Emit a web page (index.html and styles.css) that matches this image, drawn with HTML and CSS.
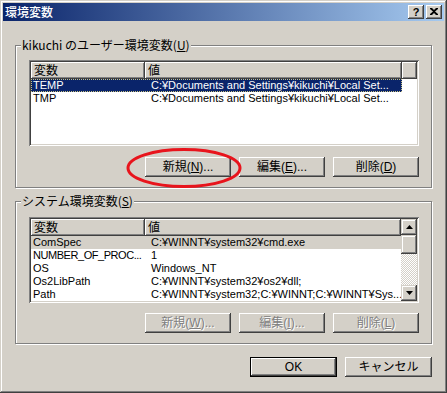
FILE: index.html
```html
<!DOCTYPE html>
<html lang="ja">
<head>
<meta charset="utf-8">
<title>環境変数</title>
<link rel="stylesheet" href="styles.css">
</head>
<body>
<div class="window">
  <div class="titlebar">
    <span class="title">環境変数</span>
    <div class="caption-btns">
      <span class="cap-btn help">?</span>
      <span class="cap-btn close">
        <svg width="8" height="7" viewBox="0 0 8 7"><path d="M0 0h2l2 2 2-2h2v1L5 3.5 8 6v1H6L4 5 2 7H0V6l3-2.5L0 1z" fill="#000"/></svg>
      </span>
    </div>
  </div>
  <div class="content">
    <div class="group">
      <span class="group-label">kikuchi のユーザー環境変数(<u>U</u>)</span>
      <div class="list list-user">
        <div class="list-main">
          <div class="header">
            <span class="hcell c1">変数</span><span class="hcell c2">値</span><span class="hcell rest"></span>
          </div>
          <div class="row selected focus"><span class="cell c1">TEMP</span><span class="cell c2">C:¥Documents and Settings¥kikuchi¥Local Set...</span></div>
          <div class="row"><span class="cell c1">TMP</span><span class="cell c2">C:¥Documents and Settings¥kikuchi¥Local Set...</span></div>
        </div>
      </div>
      <div class="btn-row">
        <button class="btn">新規(<u>N</u>)...</button>
        <button class="btn">編集(<u>E</u>)...</button>
        <button class="btn">削除(<u>D</u>)</button>
      </div>
    </div>

    <div class="group group-sys">
      <span class="group-label">システム環境変数(<u>S</u>)</span>
      <div class="list list-sys">
        <div class="list-main">
          <div class="header">
            <span class="hcell c1">変数</span><span class="hcell c2 last">値</span>
          </div>
          <div class="row inactive"><span class="cell c1">ComSpec</span><span class="cell c2">C:¥WINNT¥system32¥cmd.exe</span></div>
          <div class="row"><span class="cell c1 tight">NUMBER_OF_PROC...</span><span class="cell c2">1</span></div>
          <div class="row"><span class="cell c1">OS</span><span class="cell c2">Windows_NT</span></div>
          <div class="row"><span class="cell c1">Os2LibPath</span><span class="cell c2">C:¥WINNT¥system32¥os2¥dll;</span></div>
          <div class="row"><span class="cell c1">Path</span><span class="cell c2">C:¥WINNT¥system32;C:¥WINNT;C:¥WINNT¥Sys...</span></div>
        </div>
        <div class="scrollbar">
          <span class="sb-btn"><svg width="7" height="4" viewBox="0 0 7 4"><path d="M3.5 0L7 4H0z" fill="#000"/></svg></span>
          <span class="sb-thumb"></span>
          <span class="sb-track"></span>
          <span class="sb-btn"><svg width="7" height="4" viewBox="0 0 7 4"><path d="M0 0h7L3.5 4z" fill="#000"/></svg></span>
        </div>
      </div>
      <div class="btn-row">
        <button class="btn" disabled>新規(<u>W</u>)...</button>
        <button class="btn" disabled>編集(<u>I</u>)...</button>
        <button class="btn" disabled>削除(<u>L</u>)</button>
      </div>
    </div>

    <div class="dialog-btns">
      <button class="btn default">OK</button>
      <button class="btn">キャンセル</button>
    </div>
  </div>
  <svg class="highlight" width="120" height="44" viewBox="0 0 120 44"><ellipse cx="59" cy="21" rx="56" ry="18.5" fill="none" stroke="#e8141c" stroke-width="3"/></svg>
</div>
</body>
</html>
```

FILE: styles.css
```css
* { box-sizing: border-box; }
html, body { margin: 0; padding: 0; background: #d4d0c8; }
body {
  font-family: "Liberation Sans", "Noto Sans CJK JP", sans-serif;
  font-size: 12px;
  color: #000;
}
.window {
  position: relative;
  width: 447px;
  height: 393px;
  padding: 3px;
  background: #d4d0c8;
  box-shadow: inset -1px -1px 0 #404040, inset 1px 1px 0 #d4d0c8,
              inset -2px -2px 0 #808080, inset 2px 2px 0 #fff;
}
.titlebar {
  height: 18px;
  display: flex;
  align-items: center;
  justify-content: space-between;
  padding: 0 2px 0 2px;
  background: linear-gradient(to right, #0a246a, #a6caf0);
}
.title {
  color: #fff;
  font-family: "Noto Sans CJK JP", sans-serif;
  font-size: 12px;
  line-height: 18px;
  font-weight: 500;
}
.caption-btns { display: flex; gap: 2px; }
.cap-btn {
  width: 16px;
  height: 14px;
  display: flex;
  align-items: center;
  justify-content: center;
  background: #d4d0c8;
  box-shadow: inset -1px -1px 0 #404040, inset 1px 1px 0 #fff,
              inset -2px -2px 0 #808080;
  font-family: "Liberation Sans", sans-serif;
  font-weight: bold;
  font-size: 11px;
  line-height: 14px;
  padding-bottom: 1px;
}
.content {
  padding: 24px 12px 0 12px;
}
.group {
  position: relative;
  border: 1px solid #808080;
  box-shadow: 1px 1px 0 #fff, inset 1px 1px 0 #fff;
  padding: 14px 12px 10px 13px;
}
.group-sys {
  margin-top: 13px;
  padding-top: 15px;
}
.group-label {
  position: absolute;
  top: -8px;
  left: 5px;
  padding: 0 1px;
  background: #d4d0c8;
  line-height: 14px;
  font-family: "Noto Sans CJK JP", sans-serif;
  font-size: 12px;
}
.list {
  display: flex;
  background: #fff;
  padding: 2px;
  height: 86px;
  box-shadow: inset 1px 1px 0 #808080, inset -1px -1px 0 #fff,
              inset 2px 2px 0 #404040, inset -2px -2px 0 #d4d0c8;
}
.list-main { flex: 1; min-width: 0; overflow: hidden; }
.header { display: flex; height: 17px; }
.hcell {
  height: 17px;
  line-height: 16px;
  background: #d4d0c8;
  box-shadow: inset -1px -1px 0 #404040, inset 1px 1px 0 #fff,
              inset -2px -2px 0 #808080;
  font-family: "Noto Sans CJK JP", sans-serif;
  padding-left: 3px;
  white-space: nowrap;
  overflow: hidden;
}
.c1 { width: 114px; flex: none; }
.c2 { width: 257px; flex: none; }
.hcell.rest { flex: 1; }
.hcell.last { flex: 1; width: auto; }
.row {
  display: flex;
  height: 13px;
  line-height: 13px;
  width: 371px;
  font-size: 11px;
}
.cell {
  white-space: nowrap;
  overflow: hidden;
}
.cell.c1 { padding-left: 2px; }
.cell.c2 { padding-left: 6px; }
.cell.tight { letter-spacing: -0.45px; }
.row.selected { background: #0a246a; color: #fff; }
.row.focus { outline: 1px dotted #c8c080; outline-offset: -1px; }
.row.inactive { background: #d4d0c8; }
.scrollbar {
  width: 16px;
  flex: none;
  display: flex;
  flex-direction: column;
}
.sb-btn, .sb-thumb {
  display: flex;
  align-items: center;
  justify-content: center;
  height: 16px;
  background: #d4d0c8;
  box-shadow: inset -1px -1px 0 #404040, inset 1px 1px 0 #d4d0c8,
              inset -2px -2px 0 #808080, inset 2px 2px 0 #fff;
}
.sb-thumb { height: 19px; }
.sb-track {
  flex: 1;
  background: repeating-conic-gradient(#fff 0 25%, #d4d0c8 0 50%) 0 0 / 2px 2px;
}
.btn-row {
  display: flex;
  justify-content: flex-end;
  gap: 8px;
  margin-top: 11px;
}
.group-sys .btn-row { margin-top: 10px; }
.btn {
  width: 86px;
  height: 20px;
  margin: 0;
  padding: 0;
  border: 0;
  background: #d4d0c8;
  box-shadow: inset -1px -1px 0 #404040, inset 1px 1px 0 #fff,
              inset -2px -2px 0 #808080;
  font-family: "Liberation Sans", "Noto Sans CJK JP", sans-serif;
  font-size: 12px;
  line-height: 18px;
  color: #000;
  text-align: center;
}
.btn:disabled {
  color: #808080;
  text-shadow: 1px 1px 0 #fff;
}
.dialog-btns {
  display: flex;
  justify-content: flex-end;
  gap: 8px;
  margin-top: 13px;
}
.dialog-btns .btn { width: 87px; }
.btn.default {
  box-shadow: inset 0 0 0 1px #000, inset -2px -2px 0 #404040,
              inset 2px 2px 0 #fff, inset -3px -3px 0 #808080;
}
.highlight {
  position: absolute;
  left: 125px;
  top: 147px;
}
```
